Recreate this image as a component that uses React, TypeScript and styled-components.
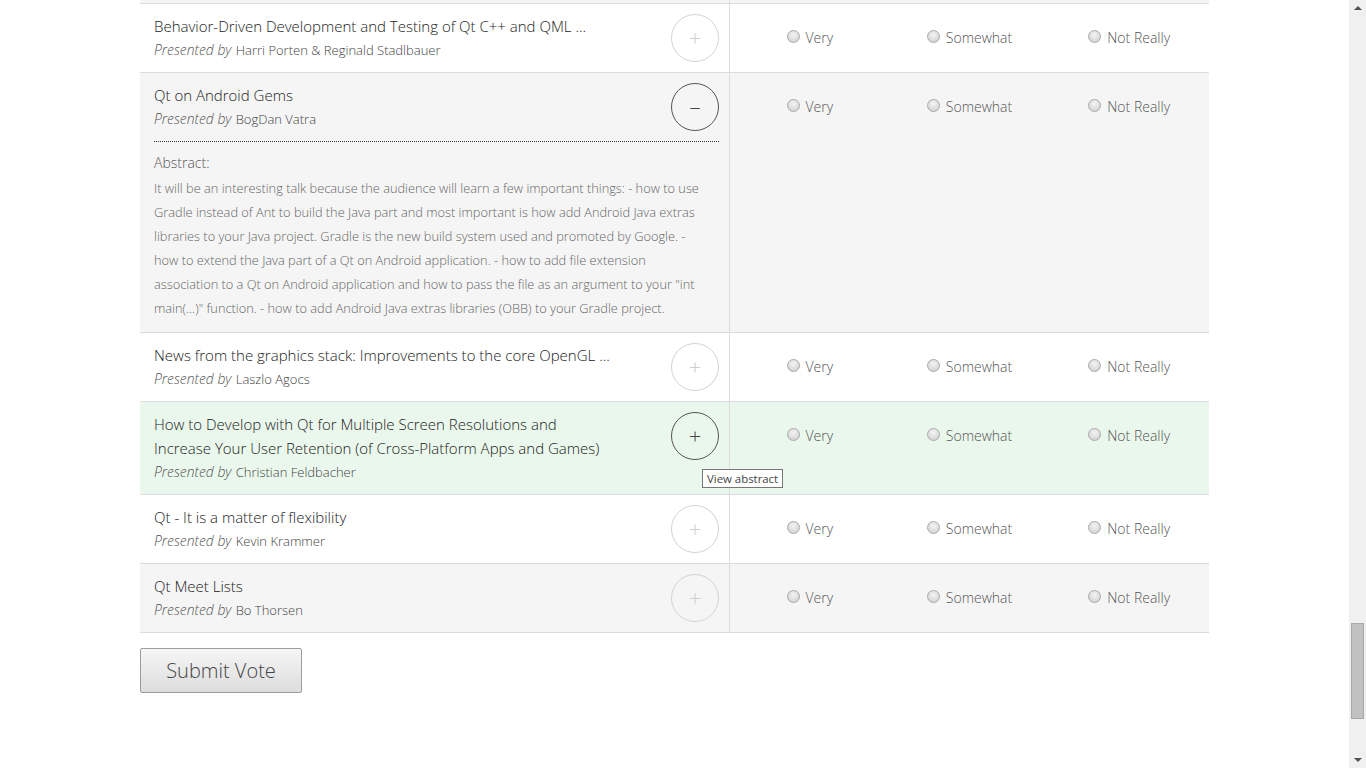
import React from "react";
import styled, { createGlobalStyle } from "styled-components";

const GlobalStyle = createGlobalStyle`
  html, body { margin: 0; padding: 0; background: #fff; }
  body { font-family: "Open Sans", "DejaVu Sans", sans-serif; color: #333; }
  * { box-sizing: border-box; }
`;

const Page = styled.div`
  display: flex;
  height: 768px;
  overflow: hidden;
`;

const Main = styled.main`
  flex: 1;
  display: flex;
  justify-content: center;
`;

const Content = styled.div`
  width: 1069px;
  display: flex;
  flex-direction: column;
`;

const Table = styled.div`
  display: flex;
  flex-direction: column;
`;

type Tone = "white" | "gray" | "green";
const toneBg: Record<Tone, string> = {
  white: "#ffffff",
  gray: "#f5f5f5",
  green: "#eaf7ec",
};

const Row = styled.div<{ $tone: Tone }>`
  display: grid;
  grid-template-columns: 590px 1fr;
  background: ${(p) => toneBg[p.$tone]};
  border-bottom: 1px solid #dcdcdc;
`;

const TailRow = styled(Row)`
  height: 4px;
`;

const TalkCell = styled.div`
  border-right: 1px solid #dcdcdc;
  padding: 10px 10px 10px 14px;
  display: flex;
  flex-direction: column;
`;

const TalkHeader = styled.div`
  display: flex;
  justify-content: space-between;
  align-items: flex-start;
`;

const TitleBlock = styled.div`
  width: 463px;
`;

const Title = styled.div`
  font-size: 15px;
  line-height: 24px;
  font-weight: 300;
  color: #222;
`;

const Presenter = styled.div`
  font-size: 13px;
  line-height: 24px;
  color: #444;
  font-weight: 300;
  em {
    font-style: italic;
    font-weight: 300;
    font-size: 13.9px;
    color: #555;
    margin-right: 1px;
  }
`;

const ToggleWrap = styled.div`
  position: relative;
  flex: none;
`;

const Toggle = styled.button<{ $active: boolean }>`
  width: 48px;
  height: 48px;
  border-radius: 50%;
  border: 1px solid ${(p) => (p.$active ? "#555" : "#d4d4d4")};
  background: transparent;
  color: ${(p) => (p.$active ? "#444" : "#cfcfcf")};
  font-family: "Open Sans", sans-serif;
  font-weight: 300;
  font-size: 22px;
  line-height: 1;
  display: flex;
  align-items: center;
  justify-content: center;
  padding: 0 0 2px 0;
  cursor: pointer;
`;

const Tooltip = styled.div`
  position: absolute;
  left: 31px;
  top: 57px;
  white-space: nowrap;
  background: #fff;
  border: 1px solid #767676;
  font-family: "Open Sans", sans-serif;
  font-size: 11.4px;
  line-height: 17px;
  padding: 0 4px;
  color: #444;
  z-index: 2;
`;

const Abstract = styled.div`
  margin-top: 10px;
  padding-top: 10px;
  border-top: 1px dotted #333;
  padding-bottom: 2px;
`;

const AbstractLabel = styled.div`
  font-size: 14px;
  line-height: 22px;
  color: #555;
  font-weight: 300;
  margin-bottom: 2px;
`;

const AbstractText = styled.p`
  margin: 0;
  font-size: 12.8px;
  line-height: 24px;
  color: #666;
  font-weight: 300;
  padding-right: 8px;
`;

const VoteCell = styled.div`
  display: grid;
  grid-template-columns: repeat(3, 1fr);
  align-items: start;
  padding-top: 24px;
`;

const Option = styled.label`
  display: flex;
  align-items: center;
  justify-content: center;
  gap: 6px;
  font-size: 14px;
  line-height: 20px;
  color: #555;
  font-weight: 300;
  cursor: pointer;
`;

const RadioDot = styled.span`
  width: 13px;
  height: 13px;
  border-radius: 50%;
  border: 1px solid #a9a9a9;
  background: radial-gradient(circle at 50% 35%, #f4f4f4 0%, #dedede 55%, #cbcbcb 100%);
  margin-bottom: 3px;
  flex: none;
`;

const SubmitRow = styled.div`
  padding-top: 15px;
`;

const SubmitButton = styled.button`
  width: 162px;
  height: 45px;
  border: 1px solid #9d9d9d;
  border-radius: 2px;
  background: linear-gradient(#f6f6f6, #dddddd);
  font-family: "Open Sans", sans-serif;
  font-weight: 300;
  font-size: 20px;
  color: #444;
  cursor: pointer;
`;

const ScrollTrack = styled.div`
  width: 17px;
  flex: none;
  background: #f0f0f0;
  display: flex;
  flex-direction: column;
  align-items: center;
  justify-content: space-between;
  position: relative;
`;

const Arrow = styled.span<{ $down?: boolean }>`
  width: 0;
  height: 0;
  border-left: 4px solid transparent;
  border-right: 4px solid transparent;
  ${(p) =>
    p.$down
      ? "border-top: 4px solid #505050; margin-bottom: 6px;"
      : "border-bottom: 4px solid #505050; margin-top: 6px;"}
`;

const Thumb = styled.span`
  position: absolute;
  left: 2px;
  top: 623px;
  width: 13px;
  height: 96px;
  background: #c1c1c1;
  border: 1px solid #a8a8a8;
`;

type Talk = {
  title: string;
  presenter: string;
  tone: Tone;
  open?: boolean;
  hover?: boolean;
  abstract?: string;
};

const talks: Talk[] = [
  {
    title: "Behavior-Driven Development and Testing of Qt C++ and QML ...",
    presenter: "Harri Porten & Reginald Stadlbauer",
    tone: "white",
  },
  {
    title: "Qt on Android Gems",
    presenter: "BogDan Vatra",
    tone: "gray",
    open: true,
    abstract:
      'It will be an interesting talk because the audience will learn a few important things: - how to use Gradle instead of Ant to build the Java part and most important is how add Android Java extras libraries to your Java project. Gradle is the new build system used and promoted by Google. - how to extend the Java part of a Qt on Android application. - how to add file extension association to a Qt on Android application and how to pass the file as an argument to your "int main(...)" function. - how to add Android Java extras libraries (OBB) to your Gradle project.',
  },
  {
    title: "News from the graphics stack: Improvements to the core OpenGL ...",
    presenter: "Laszlo Agocs",
    tone: "white",
  },
  {
    title:
      "How to Develop with Qt for Multiple Screen Resolutions and Increase Your User Retention (of Cross-Platform Apps and Games)",
    presenter: "Christian Feldbacher",
    tone: "green",
    hover: true,
  },
  {
    title: "Qt - It is a matter of flexibility",
    presenter: "Kevin Krammer",
    tone: "white",
  },
  {
    title: "Qt Meet Lists",
    presenter: "Bo Thorsen",
    tone: "gray",
  },
];

const options = ["Very", "Somewhat", "Not Really"];

export default function App() {
  return (
    <>
      <GlobalStyle />
      <Page>
        <Main>
          <Content>
            <Table>
              <TailRow $tone="gray">
                <TalkCell />
                <div />
              </TailRow>
              {talks.map((t, i) => (
                <Row key={i} $tone={t.tone}>
                  <TalkCell>
                    <TalkHeader>
                      <TitleBlock>
                        <Title>{t.title}</Title>
                        <Presenter>
                          <em>Presented by</em> {t.presenter}
                        </Presenter>
                      </TitleBlock>
                      <ToggleWrap>
                        <Toggle $active={!!t.open || !!t.hover}>
                          {t.open ? "–" : "+"}
                        </Toggle>
                        {t.hover && <Tooltip>View abstract</Tooltip>}
                      </ToggleWrap>
                    </TalkHeader>
                    {t.open && t.abstract && (
                      <Abstract>
                        <AbstractLabel>Abstract:</AbstractLabel>
                        <AbstractText>{t.abstract}</AbstractText>
                      </Abstract>
                    )}
                  </TalkCell>
                  <VoteCell>
                    {options.map((o) => (
                      <Option key={o}>
                        <RadioDot />
                        {o}
                      </Option>
                    ))}
                  </VoteCell>
                </Row>
              ))}
            </Table>
            <SubmitRow>
              <SubmitButton>Submit Vote</SubmitButton>
            </SubmitRow>
          </Content>
        </Main>
        <ScrollTrack>
          <Arrow />
          <Thumb />
          <Arrow $down />
        </ScrollTrack>
      </Page>
    </>
  );
}
